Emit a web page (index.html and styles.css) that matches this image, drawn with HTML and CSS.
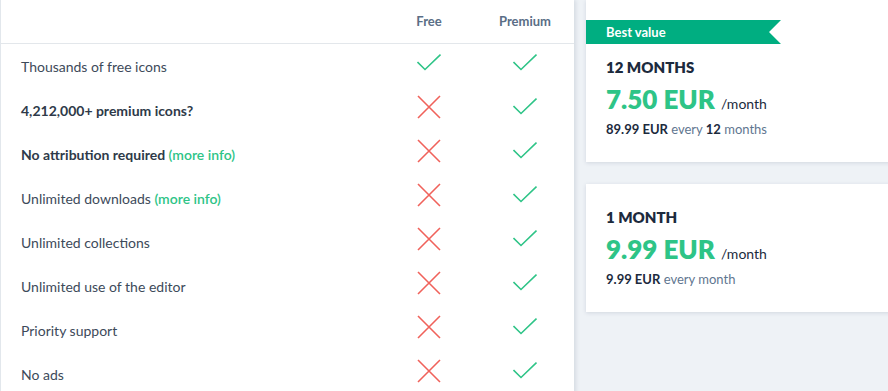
FILE: index.html
```html
<!DOCTYPE html>
<html lang="en">
<head>
  <meta charset="UTF-8" />
  <title>Plans</title>
  <link rel="stylesheet" href="styles.css">
</head>
<body>
  <div class="page">
    <div class="compare">
      <div class="row head">
        <div class="label"></div>
        <div class="col">Free</div>
        <div class="col">Premium</div>
      </div>

      <div class="row">
        <div class="label">Thousands of free icons</div>
        <div class="col"><svg class="icon check" viewBox="0 0 24 24"><path d="M0.5 11 L8 18.5 L23.5 3.5"/></svg></div>
        <div class="col"><svg class="icon check" viewBox="0 0 24 24"><path d="M0.5 11 L8 18.5 L23.5 3.5"/></svg></div>
      </div>
      <div class="row">
        <div class="label strong">4,212,000+ premium icons?</div>
        <div class="col"><svg class="icon cross" viewBox="0 0 24 24"><path d="M1 1 L23 23 M23 1 L1 23"/></svg></div>
        <div class="col"><svg class="icon check" viewBox="0 0 24 24"><path d="M0.5 11 L8 18.5 L23.5 3.5"/></svg></div>
      </div>
      <div class="row">
        <div class="label strong">No attribution required <a href="#">(more info)</a></div>
        <div class="col"><svg class="icon cross" viewBox="0 0 24 24"><path d="M1 1 L23 23 M23 1 L1 23"/></svg></div>
        <div class="col"><svg class="icon check" viewBox="0 0 24 24"><path d="M0.5 11 L8 18.5 L23.5 3.5"/></svg></div>
      </div>
      <div class="row">
        <div class="label">Unlimited downloads <a href="#">(more info)</a></div>
        <div class="col"><svg class="icon cross" viewBox="0 0 24 24"><path d="M1 1 L23 23 M23 1 L1 23"/></svg></div>
        <div class="col"><svg class="icon check" viewBox="0 0 24 24"><path d="M0.5 11 L8 18.5 L23.5 3.5"/></svg></div>
      </div>
      <div class="row">
        <div class="label">Unlimited collections</div>
        <div class="col"><svg class="icon cross" viewBox="0 0 24 24"><path d="M1 1 L23 23 M23 1 L1 23"/></svg></div>
        <div class="col"><svg class="icon check" viewBox="0 0 24 24"><path d="M0.5 11 L8 18.5 L23.5 3.5"/></svg></div>
      </div>
      <div class="row">
        <div class="label">Unlimited use of the editor</div>
        <div class="col"><svg class="icon cross" viewBox="0 0 24 24"><path d="M1 1 L23 23 M23 1 L1 23"/></svg></div>
        <div class="col"><svg class="icon check" viewBox="0 0 24 24"><path d="M0.5 11 L8 18.5 L23.5 3.5"/></svg></div>
      </div>
      <div class="row">
        <div class="label">Priority support</div>
        <div class="col"><svg class="icon cross" viewBox="0 0 24 24"><path d="M1 1 L23 23 M23 1 L1 23"/></svg></div>
        <div class="col"><svg class="icon check" viewBox="0 0 24 24"><path d="M0.5 11 L8 18.5 L23.5 3.5"/></svg></div>
      </div>
      <div class="row">
        <div class="label">No ads</div>
        <div class="col"><svg class="icon cross" viewBox="0 0 24 24"><path d="M1 1 L23 23 M23 1 L1 23"/></svg></div>
        <div class="col"><svg class="icon check" viewBox="0 0 24 24"><path d="M0.5 11 L8 18.5 L23.5 3.5"/></svg></div>
      </div>
    </div>

    <div class="plans">
      <div class="plan">
        <div class="ribbon">Best value</div>
        <div class="plan-title">12 MONTHS</div>
        <div class="plan-price">7.50 EUR <span>/month</span></div>
        <div class="plan-total"><b>89.99 EUR</b> every <b>12</b> months</div>
      </div>
      <div class="plan plain">
        <div class="plan-title">1 MONTH</div>
        <div class="plan-price">9.99 EUR <span>/month</span></div>
        <div class="plan-total"><b>9.99 EUR</b> every month</div>
      </div>
    </div>
  </div>
</body>
</html>
```

FILE: styles.css
```css
:root {
  --bg: #eef2f6;
  --text: #3d4a5a;
  --dark: #1c2a3d;
  --muted: #5f7690;
  --green: #2ec487;
  --ribbon: #00ae81;
  --red: #f0625b;
}

* {
  margin: 0;
  padding: 0;
  box-sizing: border-box;
}

body {
  font-family: Lato, 'Open Sans', sans-serif;
  background: var(--bg);
  color: var(--text);
  overflow: hidden;
}

.page {
  display: flex;
  gap: 12px;
  align-items: flex-start;
}

.compare {
  width: 574px;
  flex-shrink: 0;
  background: #fff;
  border-left: 1px solid #e2e7ec;
  box-shadow: 2px 0 4px rgba(40, 60, 90, 0.12);
}

.row {
  display: grid;
  grid-template-columns: 380px 96px 96px;
  height: 44px;
  align-items: center;
}

.row.head {
  border-bottom: 1px solid #e3e7eb;
}

.label {
  padding-left: 20px;
  font-size: 14px;
}

.label.strong {
  font-weight: 700;
  color: #2e3a49;
}

.label a {
  color: var(--green);
  text-decoration: none;
  font-weight: 600;
}

.col {
  display: flex;
  justify-content: center;
  font-size: 13px;
  font-weight: 700;
  color: #5a6e86;
}

.head .col {
  padding-bottom: 2px;
}

.icon {
  width: 24px;
  height: 24px;
  margin-bottom: 6px;
  fill: none;
  stroke-width: 1.6;
}

.check {
  stroke: var(--green);
}

.cross {
  stroke: var(--red);
}

.plans {
  display: flex;
  flex-direction: column;
  gap: 22px;
}

.plan {
  width: 320px;
  background: #fff;
  padding: 20px 20px 25px;
  box-shadow: 0 1px 4px rgba(40, 60, 90, 0.14);
}

.plan.plain {
  padding-top: 24px;
}

.ribbon {
  width: 195px;
  height: 24px;
  margin: 0 0 14px -20px;
  padding-left: 20px;
  background: var(--ribbon);
  color: #fff;
  font-size: 13px;
  font-weight: 700;
  line-height: 24px;
  clip-path: polygon(0 0, 100% 0, 183px 50%, 100% 100%, 0 100%);
}

.plan-title {
  font-size: 15px;
  font-weight: 800;
  line-height: 18px;
  color: var(--dark);
}

.plan-price {
  margin-top: 8px;
  font-size: 26px;
  font-weight: 800;
  line-height: 30px;
  color: var(--green);
}

.plan-price span {
  font-size: 14px;
  font-weight: 400;
  line-height: 1;
  color: var(--dark);
}

.plan-total {
  margin-top: 7px;
  font-size: 13px;
  line-height: 16px;
  color: var(--muted);
}

.plan-total b {
  color: var(--dark);
}
```
